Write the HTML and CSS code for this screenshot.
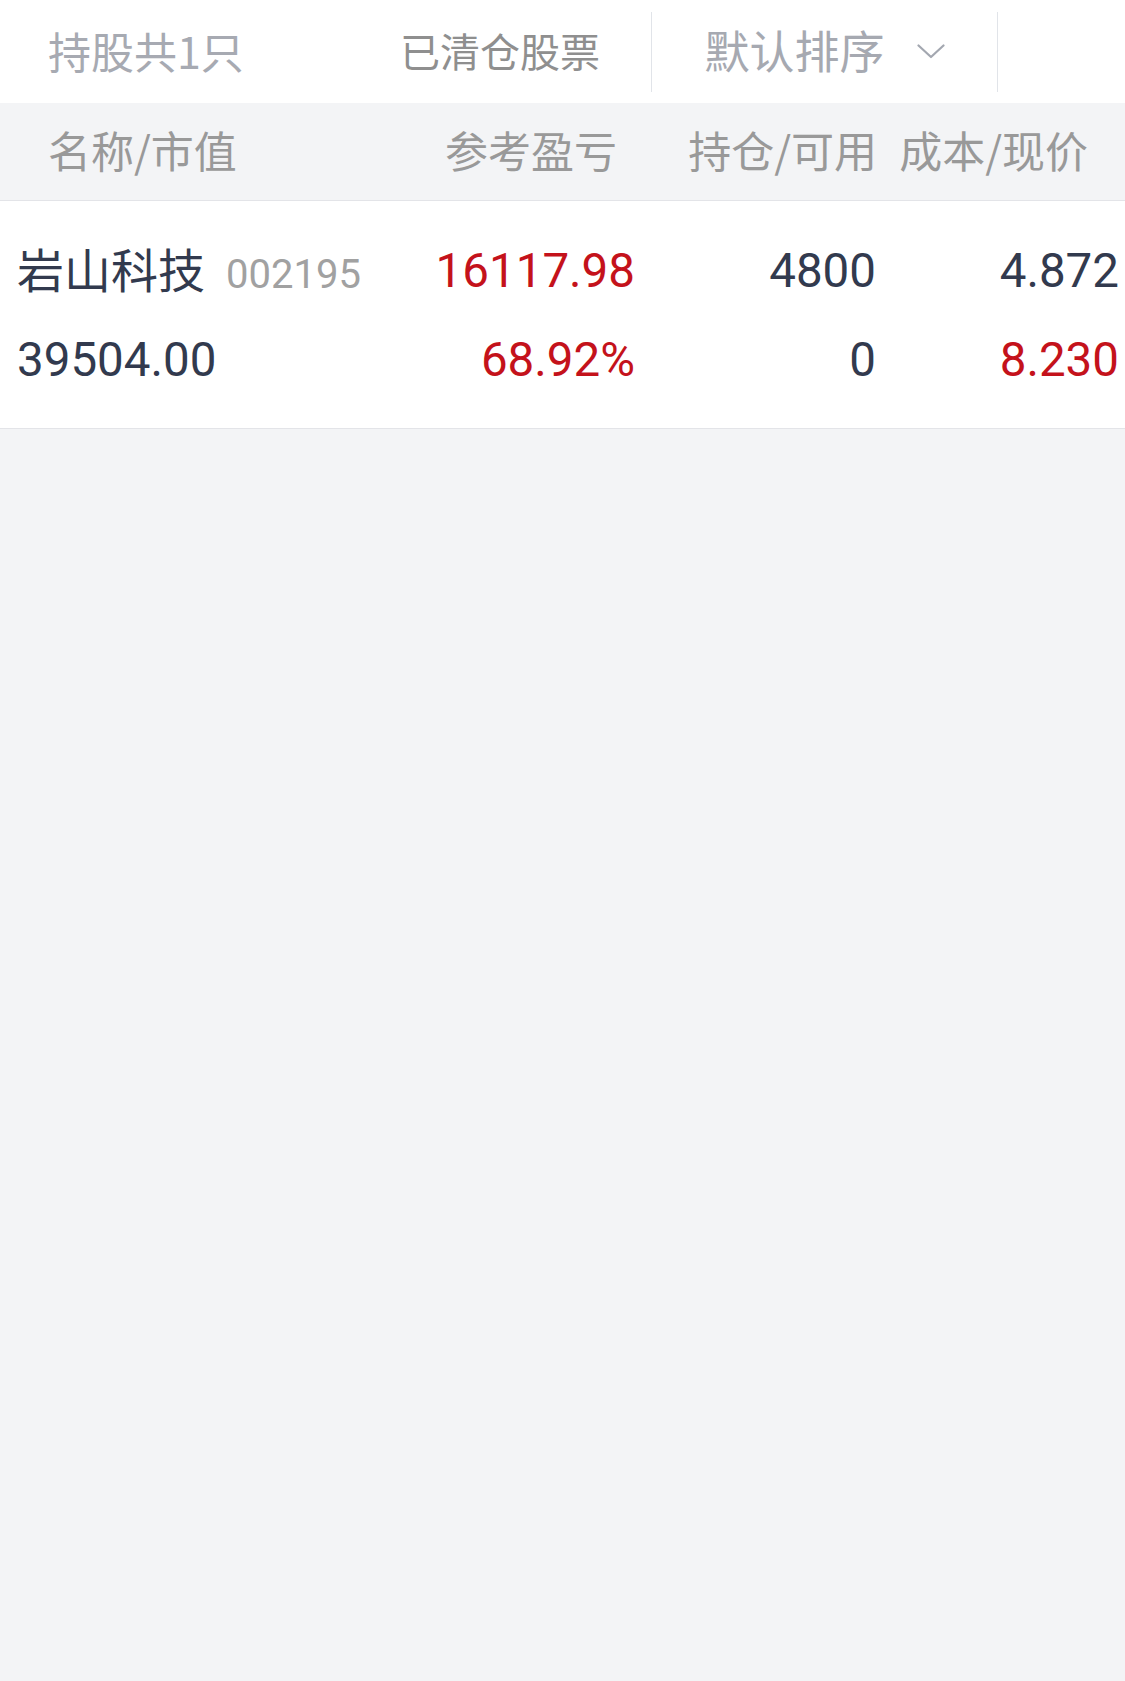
FILE: index.html
```html
<!DOCTYPE html>
<html lang="zh-CN">
<head>
<meta charset="utf-8">
<title>持仓</title>
<link rel="stylesheet" href="styles.css">
</head>
<body>
<div class="page">
  <div class="tabs">
    <div class="tab tab-count">持股共1只</div>
    <div class="tab tab-cleared">已清仓股票</div>
    <div class="sep"></div>
    <div class="tab tab-sort">
      <span>默认排序</span>
      <svg class="chev" width="28" height="15" viewBox="0 0 28 15" aria-hidden="true">
        <path d="M1.5 1.5 L14 13 L26.5 1.5" fill="none" stroke="#a3a7b0" stroke-width="2.2" stroke-linecap="round" stroke-linejoin="round"/>
      </svg>
    </div>
    <div class="sep"></div>
  </div>

  <div class="thead">
    <div class="th th-name">名称/市值</div>
    <div class="th th-r">参考盈亏</div>
    <div class="th th-r">持仓/可用</div>
    <div class="th th-r">成本/现价</div>
  </div>

  <div class="row">
    <div class="cell cell-name">
      <div class="line"><span class="stock">岩山科技</span><span class="code">002195</span></div>
      <div class="line num dark">39504.00</div>
    </div>
    <div class="cell cell-r">
      <div class="line num red">16117.98</div>
      <div class="line num red">68.92%</div>
    </div>
    <div class="cell cell-r">
      <div class="line num dark">4800</div>
      <div class="line num dark">0</div>
    </div>
    <div class="cell cell-r">
      <div class="line num dark">4.872</div>
      <div class="line num red">8.230</div>
    </div>
  </div>
</div>
</body>
</html>
```

FILE: styles.css
```css
html, body {
  margin: 0;
  padding: 0;
  background: #f3f4f6;
}

.page {
  width: 1125px;
  min-height: 1681px;
  background: #f3f4f6;
  font-family: "Noto Sans CJK SC", "Noto Sans", sans-serif;
}

/* top tab bar */
.tabs {
  display: flex;
  align-items: center;
  height: 103px;
  background: #ffffff;
}

.tab {
  box-sizing: border-box;
  line-height: 60px;
  white-space: nowrap;
  padding-bottom: 4px;
}

.tab-count {
  width: 349px;
  padding-left: 48px;
  font-size: 43px;
  color: #a7aab2;
}

.tab-cleared {
  width: 302px;
  text-align: center;
  font-size: 40px;
  color: #8f8f8f;
}

.tab-sort {
  width: 345px;
  display: flex;
  align-items: center;
  justify-content: center;
  gap: 32px;
  font-size: 45px;
  color: #a6a9b1;
}

.chev {
  display: block;
  margin-top: 4px;
}

.sep {
  width: 1px;
  height: 80px;
  background: #e1e4e9;
}

/* table header */
.thead {
  display: grid;
  grid-template-columns: 392px 177px 260px 211px;
  padding-left: 48px;
  height: 97px;
  align-items: center;
  background: #f3f4f6;
  border-bottom: 1px solid #e3e4e8;
  font-size: 43px;
  color: #999999;
  line-height: 60px;
}

.th {
  white-space: nowrap;
  padding-bottom: 6px;
}

.th-r {
  text-align: right;
}

/* data row */
.row {
  display: grid;
  grid-template-columns: 383px 235px 241px 243px;
  padding: 26px 0 23px 17px;
  background: #ffffff;
  border-bottom: 1px solid #e3e4e8;
  font-family: Roboto, "Noto Sans CJK SC", sans-serif;
}

.cell-r {
  text-align: right;
}

.line {
  height: 89px;
  line-height: 89px;
  white-space: nowrap;
}

.num {
  font-size: 47.5px;
}

.stock {
  font-size: 47px;
  color: #323a4e;
}

.code {
  font-size: 40px;
  color: #a1a1a1;
  margin-left: 21px;
}

.dark {
  color: #323a4e;
}

.red {
  color: #c4121b;
}
```
